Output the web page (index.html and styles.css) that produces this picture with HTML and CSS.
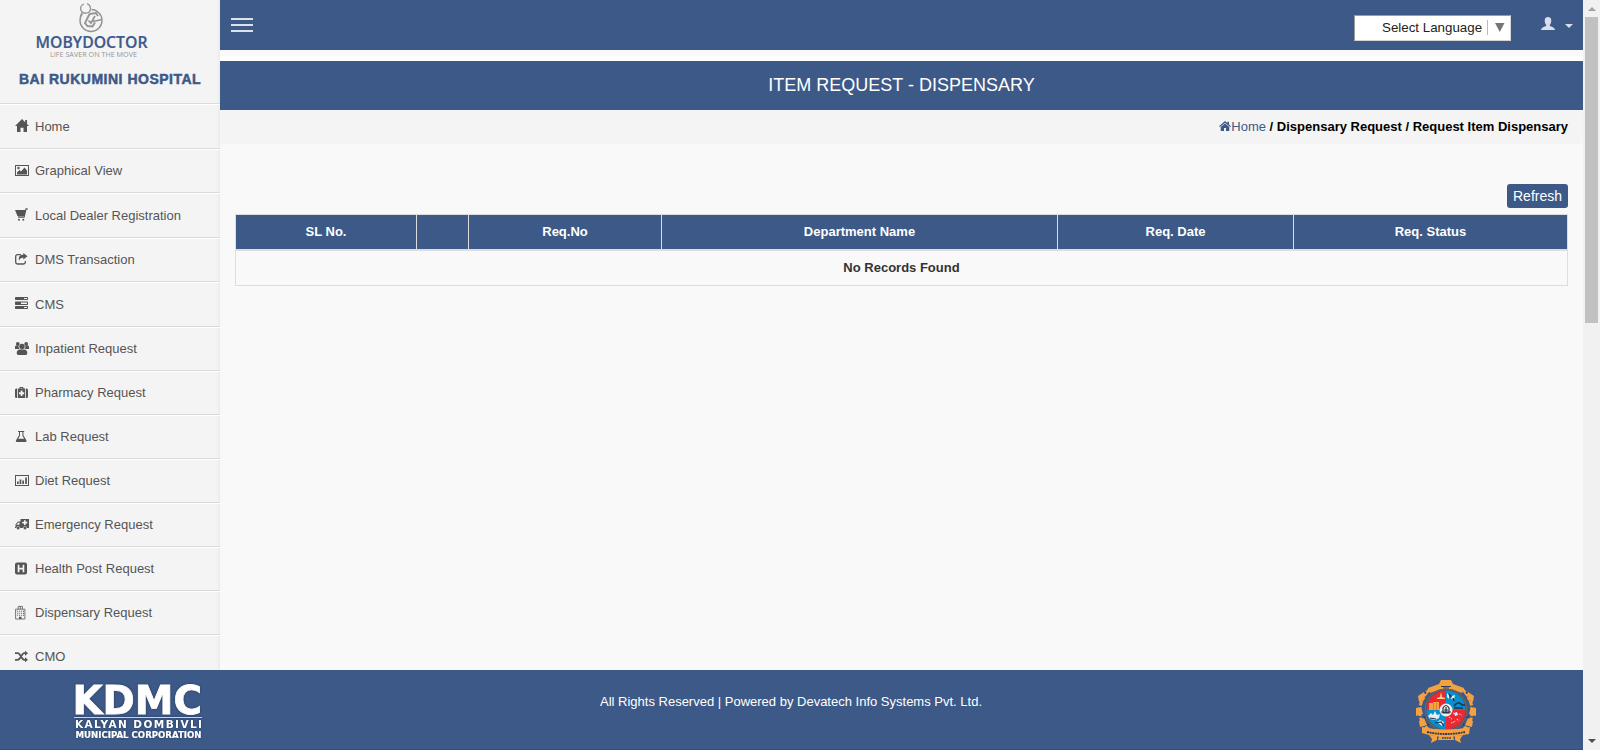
FILE: index.html
```html
<!DOCTYPE html>
<html lang="en">
<head>
<meta charset="utf-8">
<title>Item Request - Dispensary</title>
<link rel="stylesheet" href="styles.css">
</head>
<body>
<div class="window">
  <div class="page">
    <div class="main">
      <aside class="sidebar">
        <div class="brand">
          <svg class="brand-logo" width="220" height="62" viewBox="0 0 220 62">
            <g fill="none" stroke="#929496">
              <circle cx="91" cy="20.500" r="11" stroke-width="1.400"/>
              <circle cx="85.500" cy="8.500" r="4.800" stroke="#f4f4f4" stroke-width="3" fill="#f4f4f4"/>
              <path d="M84 4q-4 1.500-3.300 5.500Q82 13.500 86 13.200q4.500-.5 4.500-4.700Q90 4.500 87 3.700M82 12.500q-2 3-1.500 7" stroke-width="1.300"/>
              <path d="M89.500 14 96 13l2 3M89.500 14l-4.500 9 2.500 3 5 .500 2.500-4" stroke-width="1.900"/>
              <path d="M88.500 20.500l2.500 2.500 4-7M93 21.500l9-2" stroke-width="1.700"/>
            </g>
            <text class="logo-name" x="35.500" y="47.500" textLength="112" lengthAdjust="spacingAndGlyphs">MOBYDOCTOR</text>
            <text class="logo-tag" x="50" y="56.800" textLength="87" lengthAdjust="spacingAndGlyphs">LIFE SAVER ON THE MOVE</text>
          </svg>
          <div class="hospital">BAI RUKUMINI HOSPITAL</div>
        </div>
        <nav class="menu">
          <a class="item tall"><svg class="icon" viewBox="0 0 14 14"><path d="M7 0 0 7h2v6h3.500V8.700h3V13H12V7h2L12 5V1h-1.800v2.200z"/></svg>Home</a>
          <a class="item"><svg class="icon" viewBox="0 0 14 14"><path fill-rule="evenodd" d="M0 1h14v11H0zM1 2v9h12V2z"/><path d="M2 10.500V8.500l2.500-2.500L6 7.500l3.500-4L12 6.500v4z"/><circle cx="3.500" cy="4" r="1.200"/></svg>Graphical View</a>
          <a class="item tall"><svg class="icon" viewBox="0 0 14 14"><path d="M0 2h10l.7-1.700h2V1.500h-1.200L9.500 9.800H3v-1h5.500l.3-.9H2.500z"/><path d="M1 2.500h9L8.500 8.500H3z"/><circle cx="4" cy="11.700" r="1"/><circle cx="8.300" cy="11.700" r="1"/></svg>Local Dealer Registration</a>
          <a class="item"><svg class="icon" viewBox="0 0 14 14"><path d="M6 1.700H2.500Q.7 1.700 .7 3.500V9.300q0 1.700 1.800 1.700h6q1.800 0 1.800-1.700V8" fill="none" stroke="#555" stroke-width="1.300"/><path d="M8.300 0 12.500 3.200 8.300 6.500V4.700Q5 4.500 4 7.700 2.800 2 8.300 1.800z"/></svg>DMS Transaction</a>
          <a class="item tall"><svg class="icon" viewBox="0 0 14 14"><path fill-rule="evenodd" d="M.7 0h11.600q.7 0 .7.700v1.600q0 .7-.7.700H.7Q0 3 0 2.300V.7Q0 0 .7 0zM9 1v1h3V1zM.7 4.500h11.600q.7 0 .7.700v2.100q0 .7-.7.700H.7Q0 8 0 7.300V5.200q0-.7.700-.7zM6 5.500V7h6V5.500zM.7 9h11.600q.7 0 .7.700v1.600q0 .7-.7.700H.7Q0 12 0 11.300V9.700Q0 9 .7 9zM9 10v1h3v-1z"/></svg>CMS</a>
          <a class="item"><svg class="icon" viewBox="0 0 14 14"><circle cx="2.800" cy="2" r="1.900"/><circle cx="11.200" cy="2" r="1.900"/><circle cx="7" cy="4.500" r="2.700"/><path d="M0 7V5q0-2 1.500-1.500l2 .5q0 2 1 3zM14 7V5q0-2-1.500-1.500l-2 .5q0 2-1 3zM4.300 7.500h5.400Q12.300 8 12.300 11q0 2-1.600 2H3.300Q1.700 13 1.700 11q0-3 2.600-3.500z"/></svg>Inpatient Request</a>
          <a class="item"><svg class="icon" viewBox="0 0 14 14"><path fill-rule="evenodd" d="M2.800 2.500h1.700V1.700q0-.7.700-.7h2.600q.7 0 .7.700v.8h1.700V12H2.800zM5.500 2.500h2V2h-2zM5.700 4.500v1.700H4v2h1.700V10h1.800V8.200h1.700v-2H7.500V4.500z"/><path d="M2 2.500V12h-.7Q0 12 0 10.500V4Q0 2.500 1.300 2.500zM11 2.500V12h.7q1.300 0 1.300-1.500V4Q13 2.500 11.700 2.500z"/></svg>Pharmacy Request</a>
          <a class="item"><svg class="icon" viewBox="0 0 14 14"><path fill-rule="evenodd" d="M3 1h6.200v1H8.400v3.300l3 5q.8 1.700-1 1.700H2q-1.800 0-1-1.700l3-5V2H3zM5 2v3.700L3.200 8.700h6L7.400 5.700V2z"/></svg>Lab Request</a>
          <a class="item"><svg class="icon" viewBox="0 0 14 14"><path fill-rule="evenodd" d="M0 1h14v11H0zM1 2v9h12V2z"/><path d="M2 7.500h1.700V10H2zM4.600 5.500h1.700V10H4.600zM7.300 6.500H9V10H7.300zM10.200 3.500h1.700V10h-1.700z"/></svg>Diet Request</a>
          <a class="item"><svg class="icon" viewBox="0 0 14 14"><path fill-rule="evenodd" d="M5.500 1H14v9H0V9h.5V6.500L3 3.500h2.500zM4.500 4.500h-1l-2 2v.3h3zM9 2.300v1.500H7.300v1.600H9V7h1.600V5.400h1.700V3.800h-1.700V2.300z"/><circle cx="3.200" cy="10" r="1.700" stroke="#f4f4f4" stroke-width=".5"/><circle cx="10" cy="10" r="1.700" stroke="#f4f4f4" stroke-width=".5"/></svg>Emergency Request</a>
          <a class="item"><svg class="icon" viewBox="0 0 14 14"><path fill-rule="evenodd" d="M2 .5h8q2 0 2 2v8q0 2-2 2H2q-2 0-2-2v-8q0-2 2-2zM2.700 2.800v7.500h1.700V7.500h3.200v2.800h1.700V2.800H7.600v3H4.400v-3z"/></svg>Health Post Request</a>
          <a class="item"><svg class="icon" viewBox="0 0 14 14"><path d="M.6 3.200h9.300v9.800H.6zM3.200 3.200V.4h4.200v2.800M5.300.6v2.600" fill="none" stroke="#666" stroke-width=".9"/><path d="M2.200 4.700h1v1h-1zm2 0h1v1h-1zm2 0h1v1h-1zm1.800 0h1v1H8zM2.200 6.700h1v1h-1zm2 0h1v1h-1zm2 0h1v1h-1zM8 6.700h1v1H8zM2.200 8.700h1v1h-1zm2 0h1v1h-1zm2 0h1v1h-1zM8 8.700h1v1H8zM4 10.700h2.500V13H4z"/></svg>Dispensary Request</a>
          <a class="item"><svg class="icon" viewBox="0 0 14 14"><path d="M0 3.200h2.500Q4 3.200 5 5L7 8q1 1.800 2.500 1.800H11M0 9.800h2.500Q4 9.800 5 8L7 5q1-1.800 2.500-1.800H11" fill="none" stroke="#555" stroke-width="1.800"/><path d="M10 .7 13 3.200 10 5.700zM10 7.300l3 2.500-3 2.500z"/></svg>CMO</a>
        </nav>
      </aside>
      <section class="content">
        <header class="topbar">
          <div class="burger"><i></i><i></i><i></i></div>
          <div class="tools">
            <div class="language"><span>Select Language</span><svg class="arrow" width="18" height="15" viewBox="0 0 18 15"><path d="M.5 0v15" stroke="#bbb"/><path d="M8 3h9.500l-4.700 9z" fill="#767676"/></svg></div>
            <svg class="user" width="34" height="14" viewBox="0 0 34 14"><path d="M7 0q3.300 0 3.300 3.700 0 2.600-1.500 4.200v1q5 1.300 5.200 4.100H0q.2-2.800 5.200-4.100v-1Q3.700 6.300 3.700 3.700 3.700 0 7 0z"/><path d="M24 7h8l-4 4z"/></svg>
          </div>
        </header>
        <div class="strip"></div>
        <h1 class="title">ITEM REQUEST - DISPENSARY</h1>
        <div class="crumbs"><svg width="12" height="10" viewBox="0 0 12 10"><path d="M6 0 0 5.200l.8.800L6 1.800 11.200 6l.8-.8-2-1.800V.7H8.500v1.400zM6 2.400 1.700 6V10H5V7h2v3h3.300V6z"/></svg><a>Home</a><b>&nbsp;/ Dispensary Request / Request Item Dispensary</b></div>
        <div class="panel">
          <button class="refresh">Refresh</button>
          <table class="grid">
            <colgroup><col class="c1"><col class="c2"><col class="c3"><col class="c4"><col class="c5"><col class="c6"></colgroup>
            <thead><tr><th>SL No.</th><th></th><th>Req.No</th><th>Department Name</th><th>Req. Date</th><th>Req. Status</th></tr></thead>
            <tbody><tr><td colspan="6">No Records Found</td></tr></tbody>
          </table>
        </div>
      </section>
    </div>
    <footer class="footer">
      <svg class="kdmc" width="132" height="62" viewBox="0 0 132 62">
        <g class="kdmc-text">
          <text class="k1" x="-1.500" y="36.500" textLength="129.500" lengthAdjust="spacingAndGlyphs">KDMC</text>
          <path d="M0 40.500h128" stroke="#c9d3e8" stroke-width="1"/>
          <text class="k2" x="1" y="51.300" textLength="127">KALYAN DOMBIVLI</text>
          <text class="k3" x="1.500" y="61.200" textLength="126" lengthAdjust="spacingAndGlyphs">MUNICIPAL CORPORATION</text>
        </g>
      </svg>
      <div class="rights">All Rights Reserved | Powered by Devatech Info Systems Pvt. Ltd.</div>
      <svg class="seal" width="62" height="64" viewBox="0 0 62 64">
        <path d="M15 10Q4 20 5 34q0 9 8 16M47 10q11 10 10 24 0 9-8 16" fill="none" stroke="#f5a13f" stroke-width="3" stroke-dasharray="9 1.500"/>
        <path d="M11 13q-6 8-7 18M51 13q6 8 7 18M14 46q-5-6-6-12M48 46q5-6 6-12" fill="none" stroke="#303c58" stroke-width="1.500" stroke-dasharray="2 6"/>
        <path d="M13 9l11-4 2-4h10l2 4 11 4-2 5-11-4H26l-11 4zM3 17l6-4 1 7-6 3zM59 17l-6-4-1 7 6 3zM1 29l5-1 2 7-7 2zM61 29l-5-1-2 7 7 2zM4 42l5-3 3 7-7 2zM58 42l-5-3-3 7 7 2z" fill="#f5a13f"/>
        <path d="M26 7.500h10M28 9h6" stroke="#303c58" stroke-width="1.200"/>
        <circle cx="31" cy="31" r="20.800" fill="none" stroke="#6e6656" stroke-width="1.200"/>
        <path d="M31 31V11.500A19.500 19.500 0 0 0 11.500 31z" fill="#ec2730"/>
        <path d="M31 31h19.500A19.500 19.500 0 0 0 31 11.500z" fill="#078fce"/>
        <path d="M31 31v19.500A19.500 19.500 0 0 0 50.500 31z" fill="#e92834"/>
        <path d="M31 31H11.500A19.500 19.500 0 0 0 31 50.500z" fill="#078fce"/>
        <path d="M14 24h4v-1h6v8H14z" fill="#f5a13f"/>
        <path d="M18.500 24v7M21.500 24v7" stroke="#d96a2c" stroke-width=".6"/>
        <path d="M26 13l1 5 3 1v1h-8v-1l3-1z" fill="#ffcf8c"/>
        <path d="M32 14l2 2v4l-2-2zM37 17l3-1-1 5-3-1z" fill="#e9f2f4"/>
        <path d="M34 15l2 3M38 19l1 3M39 27q5-6 8-1l3 0M39 29h9" fill="none" stroke="#213348" stroke-width="1.600"/>
        <path d="M13 37l3-3 2 2 2-4 2 4 3-1-1 4-4 2-5-1zM22 43l3-2 4 2-2 4zM39 34l3-1 1 3-3 1z" fill="#e1edf3"/>
        <path d="M20 44l6-1 3 4M15 39l6 1" fill="none" stroke="#213348" stroke-width="1.200"/>
        <path d="M34 38l3 2M36 44l5-2M44 35l3 1M42 40l2 2M38 34l2 1" stroke="#ffc1a2" stroke-width="1.200" stroke-dasharray="1.500 1"/>
        <circle cx="31" cy="31" r="6.500" fill="#edf0ee"/>
        <path d="M28 29q3-5 6 0v5h-6zM29 31h4M31 28v6M26 33h10" fill="none" stroke="#26364a" stroke-width="1.200"/>
        <path d="M7 48q24 5 48 0l-1 7-6 1q-17 4-34 0l-7-2z" fill="#f5a13f"/>
        <path d="M12 53q19 4 38 0" fill="none" stroke="#303c58" stroke-width="1.800" stroke-dasharray="2 .6"/>
        <path d="M14 56l8 1v4l-6 3 1-4zM48 56l-8 1v4l6 3-1-4zM24 57h14l1 4H23z" fill="#f5a13f"/>
        <path d="M27 59h9" stroke="#303c58" stroke-width="1.400" stroke-dasharray="1.700 .7"/>
      </svg>
    </footer>
  </div>
  <div class="scrollbar"><i class="up"></i><i class="thumb"></i><i class="down"></i></div>
</div>
</body>
</html>
```
FILE: styles.css
```css
* { box-sizing: border-box; }
body { margin: 0; font-family: "Liberation Sans", Arial, sans-serif; font-size: 13px; color: #333; background: #f9f9f9; }
.window { display: flex; width: 1600px; height: 750px; overflow: hidden; }
.page { display: flex; flex-direction: column; width: 1583px; }
.main { display: flex; height: 670px; overflow: hidden; }
.sidebar { width: 220px; height: 670px; flex: none; overflow: hidden; background: #f4f4f4; box-shadow: inset -3px 0 3px -2px #e6e6e6; }
.brand { height: 103px; }
.brand-logo { display: block; }
.logo-name { font: 600 15.500px "Open Sans", sans-serif; fill: #3d5a8c; stroke: #3d5a8c; stroke-width: .2; }
.logo-tag { font: 7.500px "Open Sans", sans-serif; fill: #949494; }
.hospital { width: 220px; padding: 9px 0 0 19px; font-size: 14px; line-height: 16px; font-weight: bold; letter-spacing: .5px; white-space: nowrap; color: #3d5987; -webkit-text-stroke: .5px #3d5987; }
.item { display: flex; align-items: center; height: 44px; padding: 0 0 0 15px; border-top: 1px solid #dadada; box-shadow: inset 0 1px #fff; color: #555; }
.tall { height: 45px; }
.icon { width: 14px; height: 14px; margin-right: 6px; fill: #555; overflow: visible; }
.content { flex: 1; min-width: 0; }
.topbar { display: flex; justify-content: space-between; height: 50px; padding: 0 8px 0 11px; background: #3d5987; }
.burger { display: flex; flex-direction: column; gap: 4px; padding-top: 18px; }
.burger i { width: 22px; height: 2px; background: #dce2ec; }
.tools { display: flex; }
.language { display: flex; align-items: center; width: 157px; height: 26px; margin: 15px 30px 0 0; padding: 0 0 1px 27px; background: #fff; border: 1px solid #d5d5d5; border-left-color: #9b9b9b; border-top-color: #9b9b9b; color: #222; font-size: 13.330px; white-space: nowrap; }
.arrow { margin-left: 5px; flex: none; }
.user { margin-top: 17px; fill: #d8deeb; }
.strip { height: 11px; background: #f9f9f9; border-bottom: 5px solid #fff; }
.title { height: 49px; margin: 0; background: #3d5987; color: #fff; font-size: 18px; line-height: 48px; font-weight: normal; text-align: center; }
.crumbs { display: flex; align-items: center; justify-content: flex-end; height: 34px; padding: 0 15px 2px 0; background: #f4f4f4; border-radius: 0 0 4px 4px; color: #000; }
.crumbs svg { fill: #3d5987; }
.crumbs a { color: #3d5987; }
.panel { display: flex; flex-direction: column; align-items: flex-end; padding: 40px 15px 0; }
.refresh { width: 61px; height: 24px; margin: 0 0 6px; padding: 0; border: 0; border-radius: 3px; background: #3d5987; color: #fff; font: 14px "Liberation Sans", Arial, sans-serif; }
.grid { width: 1333px; table-layout: fixed; border-collapse: collapse; border: 1px solid #ddd; }
.grid th, .grid td { padding: 0; border: 1px solid #ddd; text-align: center; font-weight: bold; }
.grid th { height: 35px; padding-bottom: 1px; background: #3d5987; color: #fff; border-bottom-width: 2px; }
.grid td { height: 36px; }
.c1 { width: 181px; } .c2 { width: 52px; } .c3 { width: 193px; } .c4 { width: 396px; } .c5 { width: 236px; }
.footer { display: flex; height: 80px; padding: 0 106px 0 74px; background: #3d5987; border-bottom: 1px solid #3a4a7d; color: #fff; }
.kdmc { margin: 7px 394px 0 0; overflow: visible; }
.kdmc-text { fill: #fff; font-family: "DejaVu Sans", sans-serif; font-weight: bold; filter: drop-shadow(0 0 1px #24395e); }
.k1 { font-size: 39px; stroke: #fff; stroke-width: .8; }
.k2 { font-size: 10.500px; }
.k3 { font-size: 8.800px; stroke: #fff; stroke-width: .2; }
.rights { padding-top: 24px; line-height: 16px; }
.seal { margin: 9px 0 0 auto; }
.scrollbar { display: flex; flex-direction: column; align-items: center; width: 17px; height: 750px; background: #f1f1f1; }
.up { margin: 7px 0 6px; border: 4px solid transparent; border-top: 0; border-bottom-color: #a3a3a3; }
.thumb { width: 13px; height: 306px; background: #c1c1c1; }
.down { margin-top: auto; margin-bottom: 7px; border: 4px solid transparent; border-bottom: 0; border-top-color: #505050; }
```
